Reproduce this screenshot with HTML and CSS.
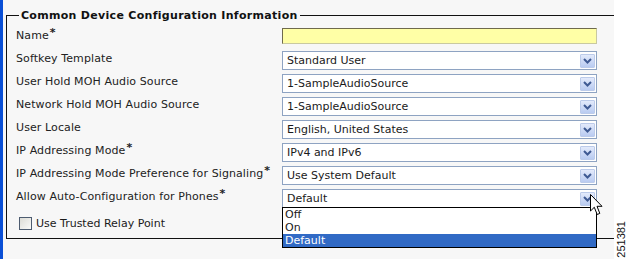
FILE: index.html
```html
<!DOCTYPE html>
<html lang="en">
<head>
  <meta charset="UTF-8" />
  <title>Common Device Configuration Information</title>
  <link rel="stylesheet" href="styles.css">
</head>
<body>
  <div class="screen">
    <div class="edge"></div>
    <div class="panel">
      <fieldset class="group">
        <legend>Common Device Configuration Information</legend>
        <div class="form">
          <label class="lbl">Name<sup>*</sup></label>
          <div class="input"></div>

          <label class="lbl">Softkey Template</label>
          <div class="select"><span class="val">Standard User</span><span class="btn"><svg width="9" height="6" viewBox="0 0 9 6"><path d="M1 1 L4.5 4.5 L8 1" fill="none" stroke="#3f5a93" stroke-width="2"/></svg></span></div>

          <label class="lbl">User Hold MOH Audio Source</label>
          <div class="select"><span class="val">1-SampleAudioSource</span><span class="btn"><svg width="9" height="6" viewBox="0 0 9 6"><path d="M1 1 L4.5 4.5 L8 1" fill="none" stroke="#3f5a93" stroke-width="2"/></svg></span></div>

          <label class="lbl">Network Hold MOH Audio Source</label>
          <div class="select"><span class="val">1-SampleAudioSource</span><span class="btn"><svg width="9" height="6" viewBox="0 0 9 6"><path d="M1 1 L4.5 4.5 L8 1" fill="none" stroke="#3f5a93" stroke-width="2"/></svg></span></div>

          <label class="lbl">User Locale</label>
          <div class="select"><span class="val">English, United States</span><span class="btn"><svg width="9" height="6" viewBox="0 0 9 6"><path d="M1 1 L4.5 4.5 L8 1" fill="none" stroke="#3f5a93" stroke-width="2"/></svg></span></div>

          <label class="lbl">IP Addressing Mode<sup>*</sup></label>
          <div class="select"><span class="val">IPv4 and IPv6</span><span class="btn"><svg width="9" height="6" viewBox="0 0 9 6"><path d="M1 1 L4.5 4.5 L8 1" fill="none" stroke="#3f5a93" stroke-width="2"/></svg></span></div>

          <label class="lbl">IP Addressing Mode Preference for Signaling<sup>*</sup></label>
          <div class="select"><span class="val">Use System Default</span><span class="btn"><svg width="9" height="6" viewBox="0 0 9 6"><path d="M1 1 L4.5 4.5 L8 1" fill="none" stroke="#3f5a93" stroke-width="2"/></svg></span></div>

          <label class="lbl">Allow Auto-Configuration for Phones<sup>*</sup></label>
          <div class="select open"><span class="val">Default</span><span class="btn"><svg width="9" height="6" viewBox="0 0 9 6"><path d="M1 1 L4.5 4.5 L8 1" fill="none" stroke="#3f5a93" stroke-width="2"/></svg></span>
            <ul class="menu">
              <li>Off</li>
              <li>On</li>
              <li class="sel">Default</li>
            </ul>
            <svg class="cursor" width="13" height="22" viewBox="0 0 13 22">
              <path d="M0.5 0.5 L0.5 17 L4.3 13.3 L7.2 20.5 L9.8 19.4 L7 12.3 L12 12.3 Z" fill="#fff" stroke="#000" stroke-width="1" stroke-linejoin="miter"/>
            </svg>
          </div>
        </div>
        <div class="check"><span class="box"></span>Use Trusted Relay Point</div>
      </fieldset>
    </div>
    <div class="margin"><span class="fig">251381</span></div>
  </div>
</body>
</html>
```

FILE: styles.css
```css
body { margin: 0; font-family: "DejaVu Sans", Verdana, sans-serif; font-size: 11px; color: #1a1a1a; }
.screen { display: flex; height: 259px; overflow: hidden; }
.edge { width: 3px; background: #0a4fd6; }
.panel { width: 608px; background: #f7f7f7; padding: 9px 0 0 3px; }
.margin { flex: 1; background: #fff; display: flex; flex-direction: column; justify-content: flex-end; align-items: center; padding-bottom: 1px; }
.fig { writing-mode: vertical-rl; transform: rotate(180deg); font-family: "Liberation Sans", Arial, sans-serif; font-size: 11px; color: #111; }

.group { margin: 0; border: 1px solid #111; border-right: none; padding: 6px 0 8px 9px; }
.group legend { margin-left: 3px; padding: 0 2px; font-weight: bold; font-size: 11px; letter-spacing: 0.3px; color: #111; }

.form { display: grid; grid-template-columns: 266px 315px; grid-auto-rows: 19px; row-gap: 4px; }
.lbl { line-height: 15px; letter-spacing: 0.1px; color: #222; }
.lbl sup { font-size: 11px; font-weight: bold; vertical-align: 3px; line-height: 0; margin-left: 1px; }

.input { height: 16px; box-sizing: border-box; background: #ffffa6; border: 1px solid #c9c9a0; border-top-color: #6f6a4d; border-left-color: #6f6a4d; }

.select { position: relative; display: flex; align-items: center; box-sizing: border-box; height: 19px; background: #fff; border: 1px solid #8ea3c2; padding: 0 1px 0 4px; }
.select .val { flex: 1; white-space: nowrap; }
.select .btn { width: 15px; height: 14px; box-sizing: border-box; border: 1px solid #bccbea; border-radius: 1px; background: linear-gradient(#e3eafb, #b9cbf1); display: flex; align-items: center; justify-content: center; }

.menu { position: absolute; top: 100%; left: -1px; right: -1px; margin: 0; padding: 0; list-style: none; background: #fff; border: 1px solid #000; z-index: 2; }
.menu li { height: 13px; line-height: 13px; padding-left: 2px; }
.menu li.sel { background: #316ac5; color: #fff; }
.cursor { position: absolute; left: 307px; top: 4px; z-index: 3; }

.check { display: flex; align-items: center; margin-top: 9px; padding-left: 3px; }
.check .box { width: 11px; height: 11px; border: 1px solid #4d5c70; background: linear-gradient(135deg, #dcdcd6, #fafaf8); margin-right: 4px; }
```
